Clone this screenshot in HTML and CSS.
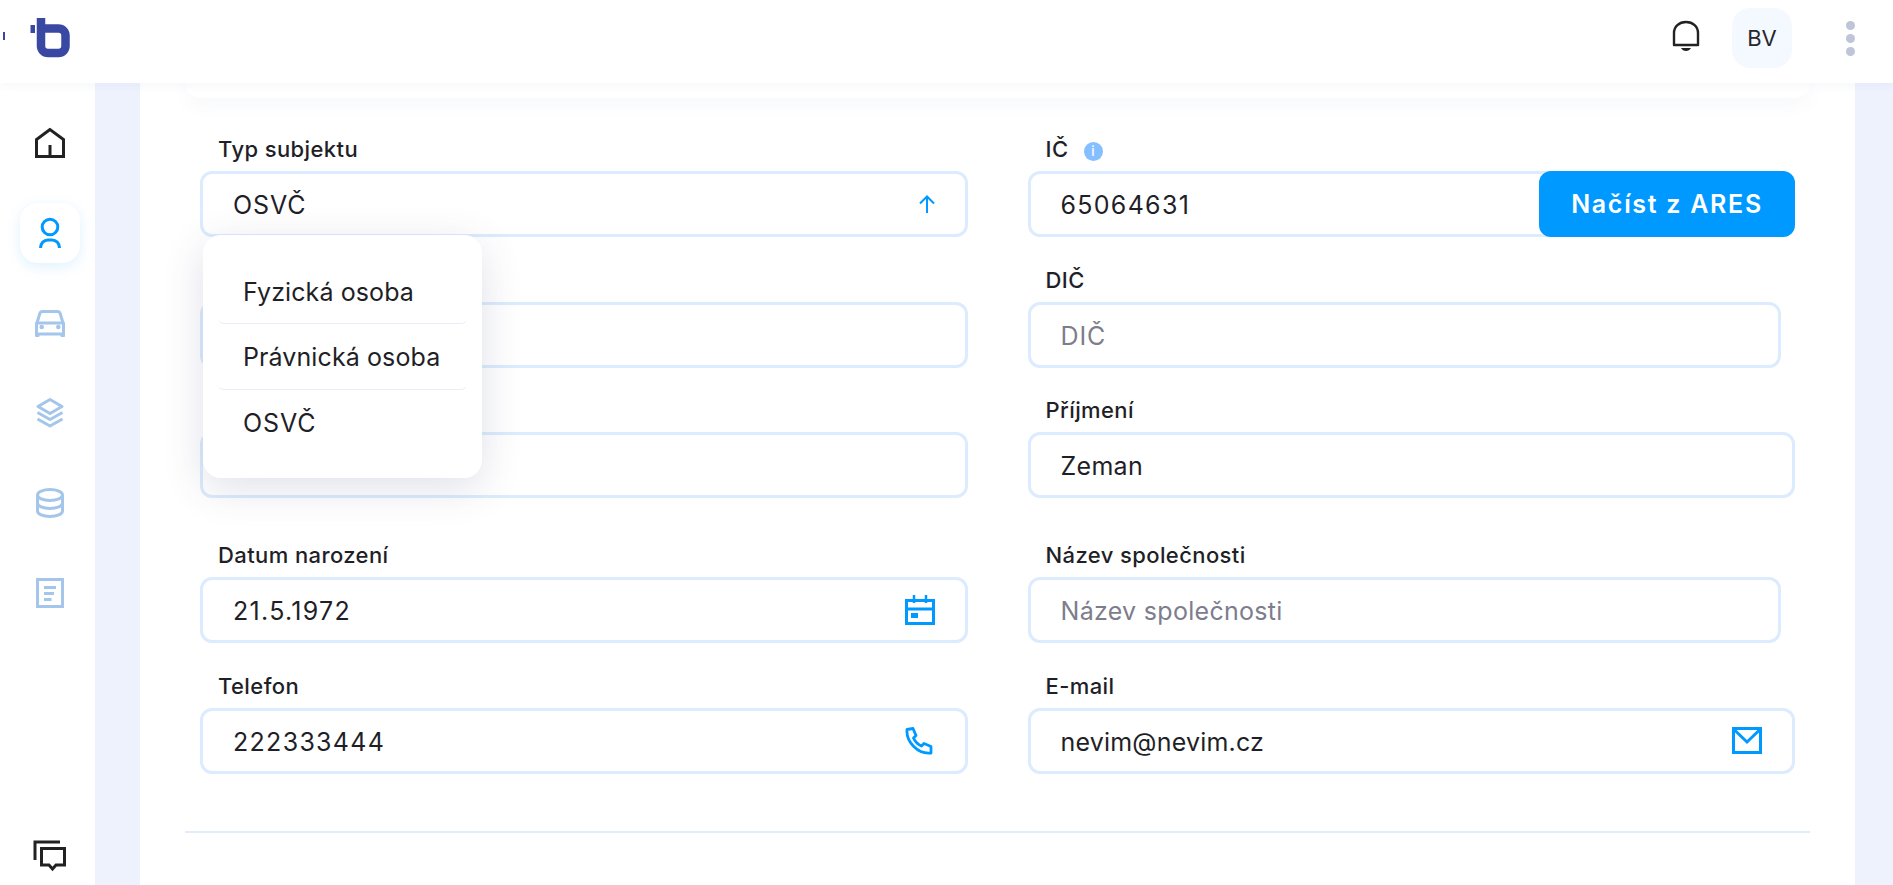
FILE: index.html
```html
<!DOCTYPE html>
<html lang="cs">
<head>
<meta charset="utf-8">
<title>Subjekt</title>
<link rel="stylesheet" href="styles.css">
</head>
<body>
<header class="topbar">
  <svg class="logo" width="75" height="83" viewBox="0 0 75 83" aria-label="logo">
    <rect x="3" y="32" width="2" height="8" fill="#3949a3"/>
    <rect x="30.5" y="25" width="4.5" height="8" fill="#3949a3"/>
    <path d="M41 18V46a7 7 0 0 0 7 7H58.500a7 7 0 0 0 7-7V35.500a7 7 0 0 0-7-7H41" fill="none" stroke="#3949a3" stroke-width="8.500"/>
  </svg>
  <div class="topbar-actions">
    <svg class="bell" width="28" height="32" viewBox="0 0 28 32">
      <path d="M2 25V13C2 6.500 7 2 14 2s12 4.500 12 11V25Z" fill="none" stroke="#222" stroke-width="2.400" stroke-linejoin="round"/>
      <path d="M9 28h10c-1 2-3 3-5 3s-4-1-5-3Z" fill="#222"/>
    </svg>
    <div class="avatar">BV</div>
    <div class="kebab"><span></span><span></span><span></span></div>
  </div>
</header>
<div class="shell">
  <nav class="sidebar">
    <div class="nav-item">
      <svg width="60" height="60" viewBox="0 0 60 60" fill="none" stroke="#222" stroke-width="3">
        <path d="M30 16.500 16.500 26.500V43.500H43.500V26.500Z" stroke-linejoin="miter"/><path d="M30 32V43.500"/>
      </svg>
    </div>
    <div class="nav-item nav-active">
      <svg width="60" height="60" viewBox="0 0 60 60" fill="none" stroke="#0099ff" stroke-width="3">
        <circle cx="30" cy="24" r="7.800"/><path d="M20.500 45c0-5 3.500-8 7.500-8h4c4 0 7.500 3 7.500 8"/>
      </svg>
    </div>
    <div class="nav-item">
      <svg width="60" height="60" viewBox="0 0 60 60" fill="none" stroke="#a4c6ea" stroke-width="3">
        <path d="M17 30l2.800-9.500q.7-2 2.700-2h15q2 0 2.700 2L43 30"/>
        <path d="M16.500 30H43.500V41H16.500Z" stroke-linejoin="round"/>
        <path d="M15 40h4.500v3q0 1-1 1H16q-1 0-1-1ZM40.500 40H45v3q0 1-1 1h-2.500q-1 0-1-1Z" fill="#a4c6ea" stroke="none"/>
        <circle cx="21.700" cy="34" r="2.300" fill="#a4c6ea" stroke="none"/><circle cx="38.300" cy="34" r="2.300" fill="#a4c6ea" stroke="none"/>
      </svg>
    </div>
    <div class="nav-item">
      <svg width="60" height="60" viewBox="0 0 60 60" fill="none" stroke="#a4c6ea" stroke-width="3" stroke-linejoin="round">
        <path d="M30 16.500 18 23.500 30 30.500 42 23.500Z"/><path d="M17.500 29.500 30 36.500 42.500 29.500"/><path d="M17.500 36 30 43 42.500 36"/>
      </svg>
    </div>
    <div class="nav-item">
      <svg width="60" height="60" viewBox="0 0 60 60" fill="none" stroke="#a4c6ea" stroke-width="3">
        <ellipse cx="30" cy="22" rx="12.500" ry="5.500"/><path d="M17.500 22V38c0 3 5.500 5.500 12.500 5.500S42.500 41 42.500 38V22"/><path d="M17.500 30c0 3 5.500 5.500 12.500 5.500S42.500 33 42.500 30"/>
      </svg>
    </div>
    <div class="nav-item">
      <svg width="60" height="60" viewBox="0 0 60 60" fill="none" stroke="#a4c6ea" stroke-width="3">
        <path d="M17.500 16.500H42.500V43.500H17.500Z"/><path d="M24 24.500H36M24 30.500H34M24 36.500H31.500"/>
      </svg>
    </div>
    <div class="nav-item nav-bottom">
      <svg width="60" height="60" viewBox="0 0 60 60" fill="none" stroke="#222" stroke-width="3">
        <path d="M40 17H15V35"/><path d="M21.500 23.500H44.500V40H36L32.500 44 29 40H21.500Z"/>
      </svg>
    </div>
  </nav>
  <main class="page">
    <section class="panel">
      <div class="panel-strip"></div>
      <form class="form">
        <div class="field field-select">
          <div class="label">Typ subjektu</div>
          <div class="input"><span class="caps">OSVČ</span>
            <svg width="16" height="18" viewBox="0 0 16 18" fill="none" stroke="#0099ff" stroke-width="2"><path d="M8 18V1.500M1 8.500 8 1.500 15 8.500"/></svg>
          </div>
          <ul class="menu">
            <li class="menu-item">Fyzická osoba</li>
            <li class="menu-item">Právnická osoba</li>
            <li class="menu-item caps">OSVČ</li>
          </ul>
        </div>
        <div class="field">
          <div class="label">IČ <span class="info">i</span></div>
          <div class="input"><span class="num">65064631</span></div>
          <button class="ares" type="button">Načíst z ARES</button>
        </div>
        <div class="field">
          <div class="label"></div>
          <div class="input"></div>
        </div>
        <div class="field field-short">
          <div class="label">DIČ</div>
          <div class="input"><span class="placeholder caps">DIČ</span></div>
        </div>
        <div class="field">
          <div class="label"></div>
          <div class="input"></div>
        </div>
        <div class="field">
          <div class="label">Příjmení</div>
          <div class="input"><span>Zeman</span></div>
        </div>
        <div class="field field-lower">
          <div class="label">Datum narození</div>
          <div class="input"><span class="num">21.5.1972</span>
            <svg width="30" height="30" viewBox="0 0 30 30" fill="none" stroke="#0099ff" stroke-width="3"><path d="M1.500 5.500H28.500V28.500H1.500ZM1.500 14H28.500"/><path d="M9 0V8M21 0V8" stroke-width="2.500"/><rect x="6" y="18" width="7" height="5" fill="#0099ff" stroke="none"/></svg>
          </div>
        </div>
        <div class="field field-lower field-short">
          <div class="label">Název společnosti</div>
          <div class="input"><span class="placeholder">Název společnosti</span></div>
        </div>
        <div class="field">
          <div class="label">Telefon</div>
          <div class="input"><span class="num">222333444</span>
            <svg class="icon-phone" width="28" height="28" viewBox="0 0 28 28" fill="none" stroke="#0099ff" stroke-width="2.800" stroke-linejoin="round"><path d="M2 2.500 8 1.500 11 8.500 8.500 11c1.500 3.500 4.500 6.500 8 8l2.500-2.500 7 3V26C13 27.500 1 15 2 2.500Z"/></svg>
          </div>
        </div>
        <div class="field">
          <div class="label">E-mail</div>
          <div class="input"><span class="mail">nevim@nevim.cz</span>
            <svg width="30" height="27" viewBox="0 0 30 27" fill="none" stroke="#0099ff" stroke-width="3"><path d="M1.500 1.500H28.500V25.500H1.500Z"/><path d="M2 2.500 15 15 28 2.500"/></svg>
          </div>
        </div>
      </form>
      <hr class="divider">
    </section>
  </main>
</div>
</body>
</html>
```

FILE: styles.css
```css
* { box-sizing: border-box; }
html, body { margin: 0; height: 100%; }
body {
  height: 885px;
  overflow: hidden;
  display: flex;
  flex-direction: column;
  background: #edf2fd;
  font-family: Inter, "Noto Sans", sans-serif;
  color: #1f1f28;
}
.topbar {
  height: 83px;
  flex: none;
  display: flex;
  justify-content: space-between;
  background: #fff;
  box-shadow: 0 2px 10px rgba(60, 80, 140, .05);
  position: relative;
  z-index: 2;
}
.logo { display: block; }
.topbar-actions {
  display: flex;
  align-items: center;
  padding-right: 38px;
}
.bell { margin-right: 32px; margin-top: -11px; }
.avatar {
  width: 60px;
  height: 60px;
  margin-top: -8px;
  border-radius: 18px;
  background: #f4f9ff;
  display: flex;
  align-items: center;
  justify-content: center;
  font-size: 22px;
  color: #26262e;
}
.kebab {
  display: flex;
  flex-direction: column;
  gap: 4px;
  margin-left: 54px;
  margin-top: -6px;
}
.kebab span {
  width: 9px;
  height: 9px;
  border-radius: 50%;
  background: #bfc4d9;
}
.shell {
  flex: 1;
  display: flex;
  min-height: 0;
}
.sidebar {
  width: 95px;
  flex: none;
  background: #fff;
  display: flex;
  flex-direction: column;
  align-items: center;
  gap: 30px;
  padding: 30px 0 0 5px;
}
.nav-item {
  width: 60px;
  height: 60px;
  flex: none;
  border-radius: 18px;
}
.nav-item svg { display: block; }
.nav-active {
  background: #fff;
  box-shadow: 0 4px 14px rgba(0, 153, 255, .13);
}
.nav-bottom { margin-top: auto; }
.page {
  flex: 1;
  padding: 0 38px 0 45px;
  min-width: 0;
}
.panel {
  height: 100%;
  background: #fff;
  padding: 0 45px;
}
.panel-strip {
  height: 15px;
  background: #fff;
  border-radius: 0 0 16px 16px;
  box-shadow: 0 4px 20px rgba(60, 80, 140, .06);
}
.form {
  display: grid;
  grid-template-columns: 1fr 1fr;
  column-gap: 60px;
  row-gap: 30.5px;
  padding: 39px 15px 0;
}
.field { position: relative; }
.field-lower { margin-top: 14.5px; }
.field-short .input { width: 753px; }
.label {
  height: 24px;
  margin: 0 0 10px 18px;
  font-size: 22px;
  line-height: 24px;
  font-weight: 500;
  letter-spacing: .4px;
  color: #1f1f28;
}
.info {
  display: inline-block;
  width: 19px;
  height: 19px;
  margin-left: 9px;
  border-radius: 50%;
  background: #85bfff;
  color: #fff;
  font-size: 13px;
  line-height: 19px;
  text-align: center;
  vertical-align: 1px;
}
.input {
  height: 66px;
  border: 3px solid #dcebfd;
  border-radius: 12px;
  padding: 0 30px;
  background: #fff;
  display: flex;
  align-items: center;
  justify-content: space-between;
  font-size: 25px;
  letter-spacing: .3px;
  color: #1f1f28;
}
.input span { padding-top: 2px; }
.input .num { letter-spacing: 1.3px; }
.input .caps, .menu .caps { letter-spacing: .9px; }
.input .mail { letter-spacing: .2px; }
.placeholder { color: #7d7d8c; }
.icon-phone { margin-right: 2px; }
.ares {
  position: absolute;
  right: 0;
  top: 34px;
  width: 256px;
  height: 66px;
  border: 0;
  border-radius: 12px;
  background: #0099ff;
  color: #fff;
  font: 600 25px Inter, "Noto Sans", sans-serif;
  letter-spacing: 1.7px;
}
.menu {
  position: absolute;
  left: 3px;
  top: 98px;
  width: 279px;
  height: 243px;
  margin: 0;
  padding: 23px 15px;
  list-style: none;
  background: #fff;
  border-radius: 18px;
  box-shadow: 0 10px 40px rgba(60, 70, 120, .16);
  z-index: 1;
}
.menu-item {
  height: 66px;
  padding: 1px 25px 0;
  display: flex;
  align-items: center;
  font-size: 25px;
  letter-spacing: .1px;
  border-bottom: 1px solid #ececf6;
  border-radius: 0 0 6px 6px;
  color: #1f1f28;
}
.menu-item:first-child { padding-top: 3px; }
.menu-item:last-child { padding: 0 25px 1px; border-bottom: 0; }
.divider {
  margin: 57px 0 0;
  border: 0;
  height: 2px;
  background: #dfecfb;
}
```
